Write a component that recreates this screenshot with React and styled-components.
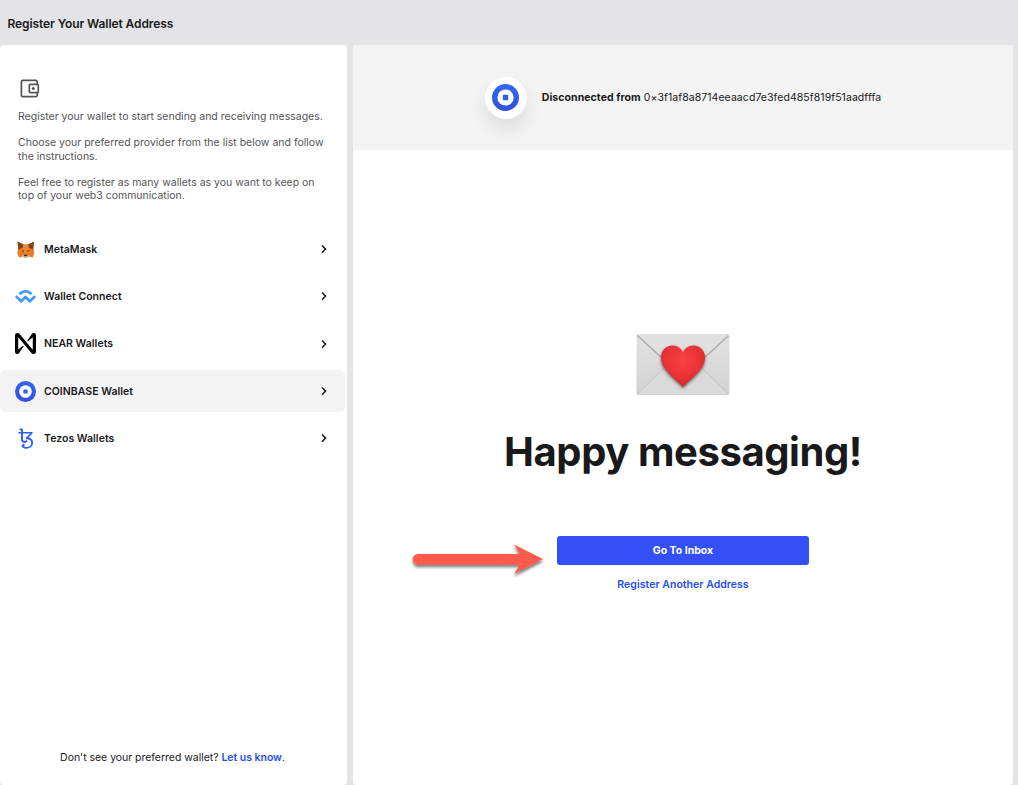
import React from "react";
import styled, { createGlobalStyle } from "styled-components";
import { SiWalletconnect } from "react-icons/si";

const GlobalStyle = createGlobalStyle`
  * { box-sizing: border-box; }
  body {
    margin: 0;
    background: #e4e4e6;
    color: #19191b;
    font-family: Inter, "Liberation Sans", sans-serif;
    -webkit-font-smoothing: antialiased;
  }
  p, h1, h2 { margin: 0; }
`;

const Page = styled.div`
  height: 785px;
  overflow: hidden;
  display: flex;
  flex-direction: column;
`;

const Header = styled.header`
  height: 45px;
  flex: none;
  display: flex;
  align-items: center;
  padding: 2px 7.5px 0;
`;

const Title = styled.h2`
  font-size: 12px;
  font-weight: 600;
  letter-spacing: -0.09px;
  white-space: nowrap;
`;

const Columns = styled.div`
  flex: 1;
  display: grid;
  grid-template-columns: 347px 660px;
  column-gap: 6px;
  min-height: 0;
`;

const Sidebar = styled.aside`
  background: #fff;
  border-radius: 4px;
  display: flex;
  flex-direction: column;
  overflow: hidden;
`;

const Intro = styled.div`
  padding: 33px 10px 0 18px;
  height: 183px;
  color: #535355;
  font-size: 10.5px;
  line-height: 13.3px;
  svg { display: block; margin: 0 0 11px 1px; }
  p { white-space: nowrap; }
  p + p { margin-top: 13px; }
`;

const Providers = styled.nav`
  display: flex;
  flex-direction: column;
  gap: 5.3px;
  width: 345px;
`;

const Provider = styled.button`
  height: 42px;
  border: 0;
  border-radius: 5px;
  background: ${(p) => (p.$active ? "#f3f3f3" : "transparent")};
  display: grid;
  grid-template-columns: 21px 1fr 12px;
  column-gap: 8px;
  align-items: center;
  padding: ${(p) => (p.$active ? "1px 15px 0" : "0 15px")};
  font: inherit;
  font-size: 10.5px;
  font-weight: 600;
  letter-spacing: 0.03px;
  color: inherit;
  text-align: left;
`;

const IconSlot = styled.span`
  display: flex;
  justify-content: center;
  svg { display: block; }
`;

const Help = styled.p`
  margin-top: auto;
  padding: 0 2px 20px 0;
  text-align: center;
  font-size: 10.5px;
  line-height: 14px;
  letter-spacing: -0.03px;
`;

const Link = styled.a`
  color: #244cf2;
  font-weight: 600;
`;

const Main = styled.main`
  position: relative;
  background: #fff;
  border-radius: 4px;
  overflow: hidden;
  display: flex;
  flex-direction: column;
`;

const Status = styled.div`
  height: 105px;
  flex: none;
  background: #f3f3f3;
  display: flex;
  align-items: center;
  justify-content: center;
  gap: 15px;
  font-size: 10.5px;
  white-space: nowrap;
`;

const StatusBadge = styled.span`
  width: 42px;
  height: 42px;
  border-radius: 50%;
  background: #fff;
  display: flex;
  align-items: center;
  justify-content: center;
  box-shadow: 0 10px 18px rgba(0, 0, 0, 0.09);
`;

const StatusText = styled.p`
  letter-spacing: 0.065px;
`;

const Content = styled.section`
  flex: 1;
  display: flex;
  flex-direction: column;
  align-items: center;
  padding-top: 181px;
`;

const Headline = styled.h1`
  margin-top: 31px;
  font-size: 40px;
  line-height: 50px;
  font-weight: 700;
  letter-spacing: -0.42px;
  white-space: nowrap;
`;

const InboxButton = styled.button`
  margin-top: 59px;
  width: 252px;
  height: 29px;
  border: 0;
  border-radius: 3px;
  background: #334ff7;
  color: #fff;
  font: inherit;
  font-size: 10.5px;
  font-weight: 700;
`;

const AnotherLink = styled(Link)`
  margin-top: 13px;
  font-size: 10.5px;
  line-height: 14px;
  letter-spacing: 0.03px;
`;

const Pointer = styled.svg`
  position: absolute;
  left: 52px;
  top: 492px;
`;

const WalletIcon = () => (
  <svg width="21" height="21" viewBox="0 0 21 21" fill="none" stroke="#535355" strokeWidth="1.7" strokeLinejoin="round">
    <path d="M18.2 6.3V3.6a1.2 1.2 0 0 0-1.2-1.2H3.6a1.2 1.2 0 0 0-1.2 1.2v13.8a1.2 1.2 0 0 0 1.2 1.2H17a1.2 1.2 0 0 0 1.2-1.2v-2.7" />
    <rect x="10.3" y="6.4" width="9" height="8.2" rx="1" />
    <circle cx="14.3" cy="10.5" r="1.5" fill="#535355" stroke="none" />
  </svg>
);

const MetaMaskIcon = () => (
  <svg width="18" height="17" viewBox="0 0 36 34">
    <path d="M1 1l12 6h9l12-6-1 14 1.5 10-3 8-8-2-3 2h-5l-3-2-8 2-4-8 1.5-10z" fill="#ea7a24" />
    <path d="M1 1l12 6-1.5 6-7 4-2-2zM34 1L22 7l1.5 6 7 4 2-2z" fill="#7f431d" />
    <path d="M13 7h9l2 9-4 8h-5l-4-8z" fill="#f08a2e" />
    <path d="M9.5 18l5 1.5-1 3zM25.5 18l-5 1.5 1 3z" fill="#4a3b35" />
    <path d="M9 30l5-2.5 1.5 1h4l1.5-1 5 2.5-6 3h-5z" fill="#d7c1b3" />
    <path d="M14.5 27.5h6l1 3h-8z" fill="#33302e" />
  </svg>
);

const NearIcon = () => (
  <svg width="21" height="21" viewBox="0 0 24 24" fill="#000">
    <path d="M21.443 0c-.89 0-1.714.46-2.18 1.218l-5.017 7.448a.533.533 0 0 0 .792.7l4.938-4.282a.2.2 0 0 1 .334.151v13.41a.2.2 0 0 1-.354.128L5.03.905A2.555 2.555 0 0 0 3.078 0h-.521A2.557 2.557 0 0 0 0 2.557v18.886a2.557 2.557 0 0 0 4.736 1.338l5.017-7.448a.533.533 0 0 0-.792-.7l-4.938 4.283a.2.2 0 0 1-.333-.152V5.352a.2.2 0 0 1 .354-.128l14.924 17.87c.486.574 1.2.905 1.952.906h.521A2.558 2.558 0 0 0 24 21.445V2.557A2.558 2.558 0 0 0 21.443 0Z" />
  </svg>
);

const TezosIcon = () => (
  <svg width="21" height="21" viewBox="0 0 21 21" fill="none" stroke="#2c5ef5" strokeWidth="1.6" strokeLinejoin="round">
    <path d="M3.4 4.8H17L11.6 10.4" />
    <path d="M4.6 1.4H7V11.2C7 14.4 10.4 14.8 12 12.6" strokeWidth="1.9" />
    <path d="M11 10.3C14.8 10 17.2 11.800 17.200 14.700C17.200 18.100 14.200 19.800 11.200 19.800C8.800 19.800 7.300 18.700 7.500 17.200" strokeWidth="1.8" />
    <circle cx="8.500" cy="16.900" r="1.200" fill="#2c5ef5" stroke="none" />
  </svg>
);

const CoinbaseIcon = ({ size, id }) => (
  <svg width={size} height={size} viewBox="0 0 28 28">
    <defs>
      <linearGradient id={id} x1="0" y1="0" x2="0" y2="1">
        <stop offset="0" stopColor="#3467f4" />
        <stop offset="1" stopColor="#3150dc" />
      </linearGradient>
    </defs>
    <circle cx="14" cy="14" r="14" fill={`url(#${id})`} />
    <circle cx="14" cy="14" r="8.4" fill="#fff" />
    <rect x="11.2" y="11.2" width="5.6" height="5.6" rx="0.7" fill="#315ce8" />
  </svg>
);

const Chevron = () => (
  <svg width="12" height="12" viewBox="0 0 12 12" fill="none" stroke="#19191b" strokeWidth="1.5">
    <path d="M4 2.5L7.6 6.1 4 9.7" />
  </svg>
);

const LoveLetter = () => (
  <svg width="96" height="65" viewBox="0 0 96 65">
    <defs>
      <linearGradient id="paper" x1="0" y1="0" x2="0" y2="1">
        <stop offset="0" stopColor="#e2e2e2" />
        <stop offset="1" stopColor="#d2d2d2" />
      </linearGradient>
      <radialGradient id="heart" cx="0.5" cy="0.35" r="0.65">
        <stop offset="0" stopColor="#f84244" />
        <stop offset="0.6" stopColor="#ea3335" />
        <stop offset="1" stopColor="#c9282b" />
      </radialGradient>
      <filter id="heartShadow" x="-20%" y="-20%" width="140%" height="150%">
        <feDropShadow dx="0" dy="1.5" stdDeviation="1.5" floodColor="#333" floodOpacity="0.75" />
      </filter>
    </defs>
    <rect x="1.5" y="3" width="93" height="61" rx="2" fill="url(#paper)" />
    <path d="M2.5 63L37 28h22l34.5 35z" fill="#dadada" />
    <path d="M2.5 63L37 29M93.5 63L59 29" stroke="#bdbdbd" strokeWidth="0.9" />
    <path d="M2.5 3.8h91L57 37q-9 7-18 0z" fill="#e0e0e0" />
    <path d="M2.5 4.5L36 35M93.5 4.5L60 35" stroke="#b3b3b7" strokeWidth="1.8" />
    <path d="M3.5 4L37 34M92.5 4L59 34" stroke="#ededed" strokeWidth="0.7" />
    <path d="M48 56C41 48 26 39 26 26.5c0-7 5-12 11.5-12 5 0 9 3 10.5 7 1.5-4 5.5-7 10.5-7C65 14.5 70 19.5 70 26.5c0 12.5-15 21.5-22 29.5z" fill="url(#heart)" filter="url(#heartShadow)" />
  </svg>
);

const PROVIDERS = [
  { name: "MetaMask", icon: <MetaMaskIcon /> },
  { name: "Wallet Connect", icon: <SiWalletconnect size={21} color="#3b99fc" /> },
  { name: "NEAR Wallets", icon: <NearIcon /> },
  { name: "COINBASE Wallet", icon: <CoinbaseIcon size={21} id="cbList" />, active: true },
  { name: "Tezos Wallets", icon: <TezosIcon /> },
];

export default function App() {
  return (
    <Page>
      <GlobalStyle />
      <Header>
        <Title>Register Your Wallet Address</Title>
      </Header>
      <Columns>
        <Sidebar>
          <Intro>
            <WalletIcon />
            <p>Register your wallet to start sending and receiving messages.</p>
            <p>
              Choose your preferred provider from the list below and follow
              <br />
              the instructions.
            </p>
            <p>
              Feel free to register as many wallets as you want to keep on
              <br />
              top of your web3 communication.
            </p>
          </Intro>
          <Providers>
            {PROVIDERS.map((p) => (
              <Provider key={p.name} $active={p.active}>
                <IconSlot>{p.icon}</IconSlot>
                {p.name}
                <Chevron />
              </Provider>
            ))}
          </Providers>
          <Help>
            Don't see your preferred wallet? <Link>Let us know</Link>.
          </Help>
        </Sidebar>
        <Main>
          <Status>
            <StatusBadge>
              <CoinbaseIcon size={27} id="cbStatus" />
            </StatusBadge>
            <StatusText>
              <b>Disconnected from</b> 0×3f1af8a8714eeaacd7e3fed485f819f51aadfffa
            </StatusText>
          </Status>
          <Content>
            <LoveLetter />
            <Headline>Happy messaging!</Headline>
            <InboxButton>Go To Inbox</InboxButton>
            <AnotherLink>Register Another Address</AnotherLink>
          </Content>
          <Pointer width="146" height="46" viewBox="0 0 146 46">
            <defs>
              <filter id="pointerShadow" x="-10%" y="-20%" width="120%" height="160%">
                <feDropShadow dx="0" dy="2.5" stdDeviation="1.5" floodColor="#000" floodOpacity="0.55" />
              </filter>
            </defs>
            <path
              d="M13 17H115L109 7.5L138 22L109 37L115 27.5H13A5.2 5.2 0 0 1 13 17Z"
              fill="#ff5a4c"
              filter="url(#pointerShadow)"
            />
          </Pointer>
        </Main>
      </Columns>
    </Page>
  );
}
